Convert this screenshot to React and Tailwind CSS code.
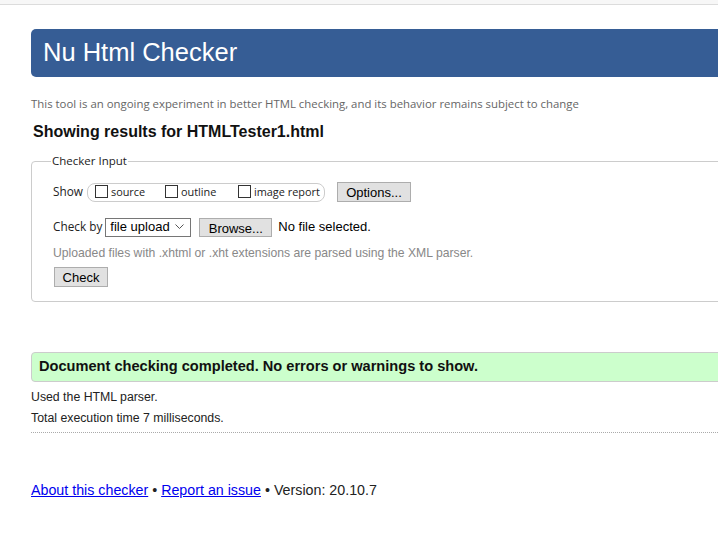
import React from "react";

function Box() {
  return <span className="inline-block w-[13px] h-[13px] border border-[#333] bg-white mr-[3px]" />;
}

export default function App() {
  return (
    <div className="w-[718px] h-[550px] bg-white overflow-hidden font-['Liberation_Sans',Arial,sans-serif] text-[#222]">
      <div className="h-[5px] bg-[#f7f7f7] border-b border-[#dcdcdc]" />
      <div className="pl-[31px] w-[760px]">
        <div className="mt-[24px] h-[48px] bg-[#365d95] rounded-l-[5px] flex items-center pl-[12px]">
          <h1 className="text-white text-[25.5px] leading-none">Nu Html Checker</h1>
        </div>
        <p className="mt-[20px] text-[11.4px] leading-[14px] text-[#666] font-['Open_Sans',sans-serif]">
          This tool is an ongoing experiment in better HTML checking, and its behavior remains subject to change
        </p>
        <h2 className="mt-[12px] ml-[2px] text-[16px] font-bold leading-[18px] text-[#111]">
          Showing results for HTMLTester1.html
        </h2>
        <fieldset className="mt-[13px] border border-[#ccc] rounded-[4px] pl-[21px] pr-0 pt-[14px] pb-[12px]">
          <legend className="ml-[-2px] px-[1px] text-[11.5px] text-[#222] font-['Open_Sans',sans-serif] leading-[14px]">Checker Input</legend>
          <div className="flex items-center h-[20px]">
            <span className="text-[11.8px] font-['Open_Sans',sans-serif] mr-[4px]">Show</span>
            <div className="flex items-center h-[19px] w-[238px] border border-[#ccc] rounded-[8px] pl-[7px] text-[10.9px] font-['Open_Sans',sans-serif]">
              <label className="flex items-center w-[70px]"><Box />source</label>
              <label className="flex items-center w-[73px]"><Box />outline</label>
              <label className="flex items-center"><Box />image report</label>
            </div>
            <button className="ml-[12px] h-[20px] w-[74px] bg-[#e1e1e1] border border-[#adadad] text-[13px] text-black">Options...</button>
          </div>
          <div className="flex items-center mt-[15px] h-[20px] text-[13px]">
            <span className="font-['Open_Sans',sans-serif] text-[11.8px] mr-[3px]">Check by</span>
            <div className="flex items-center justify-between w-[86px] h-[19px] border border-[#767676] pl-[4px] pr-[6px] text-[13px] text-black">
              <span>file upload</span>
              <svg width="9" height="6" viewBox="0 0 9 6"><path d="M0.5 0.5 L4.5 4.5 L8.5 0.5" fill="none" stroke="#555" strokeWidth="1" /></svg>
            </div>
            <button className="ml-[8px] h-[19px] w-[73px] bg-[#e1e1e1] border border-[#adadad] text-[13px] text-black">Browse...</button>
            <span className="ml-[6px] text-black">No file selected.</span>
          </div>
          <p className="mt-[9px] text-[12.2px] leading-[14px] text-[#888]">Uploaded files with .xhtml or .xht extensions are parsed using the XML parser.</p>
          <button className="mt-[7px] ml-[1px] h-[20px] w-[54px] bg-[#e1e1e1] border border-[#adadad] text-[13px] text-black">Check</button>
        </fieldset>
        <div className="mt-[50px] h-[30px] bg-[#ccffcc] border border-[#ccc] rounded-l-[4px] flex items-center pl-[7px]">
          <span className="text-[14.6px] font-bold text-[#111]">Document checking completed. No errors or warnings to show.</span>
        </div>
        <p className="mt-[8px] text-[12.3px] leading-[14px]">Used the HTML parser.</p>
        <p className="mt-[7px] text-[12.3px] leading-[14px]">Total execution time 7 milliseconds.</p>
        <div className="mt-[7px] border-t border-dotted border-[#aaa]" />
        <p className="mt-[49px] text-[14.25px] leading-[16px]">
          <a href="#" className="text-[#0000ee] underline">About this checker</a>
          {" • "}
          <a href="#" className="text-[#0000ee] underline">Report an issue</a>
          {" • Version: 20.10.7"}
        </p>
      </div>
    </div>
  );
}
